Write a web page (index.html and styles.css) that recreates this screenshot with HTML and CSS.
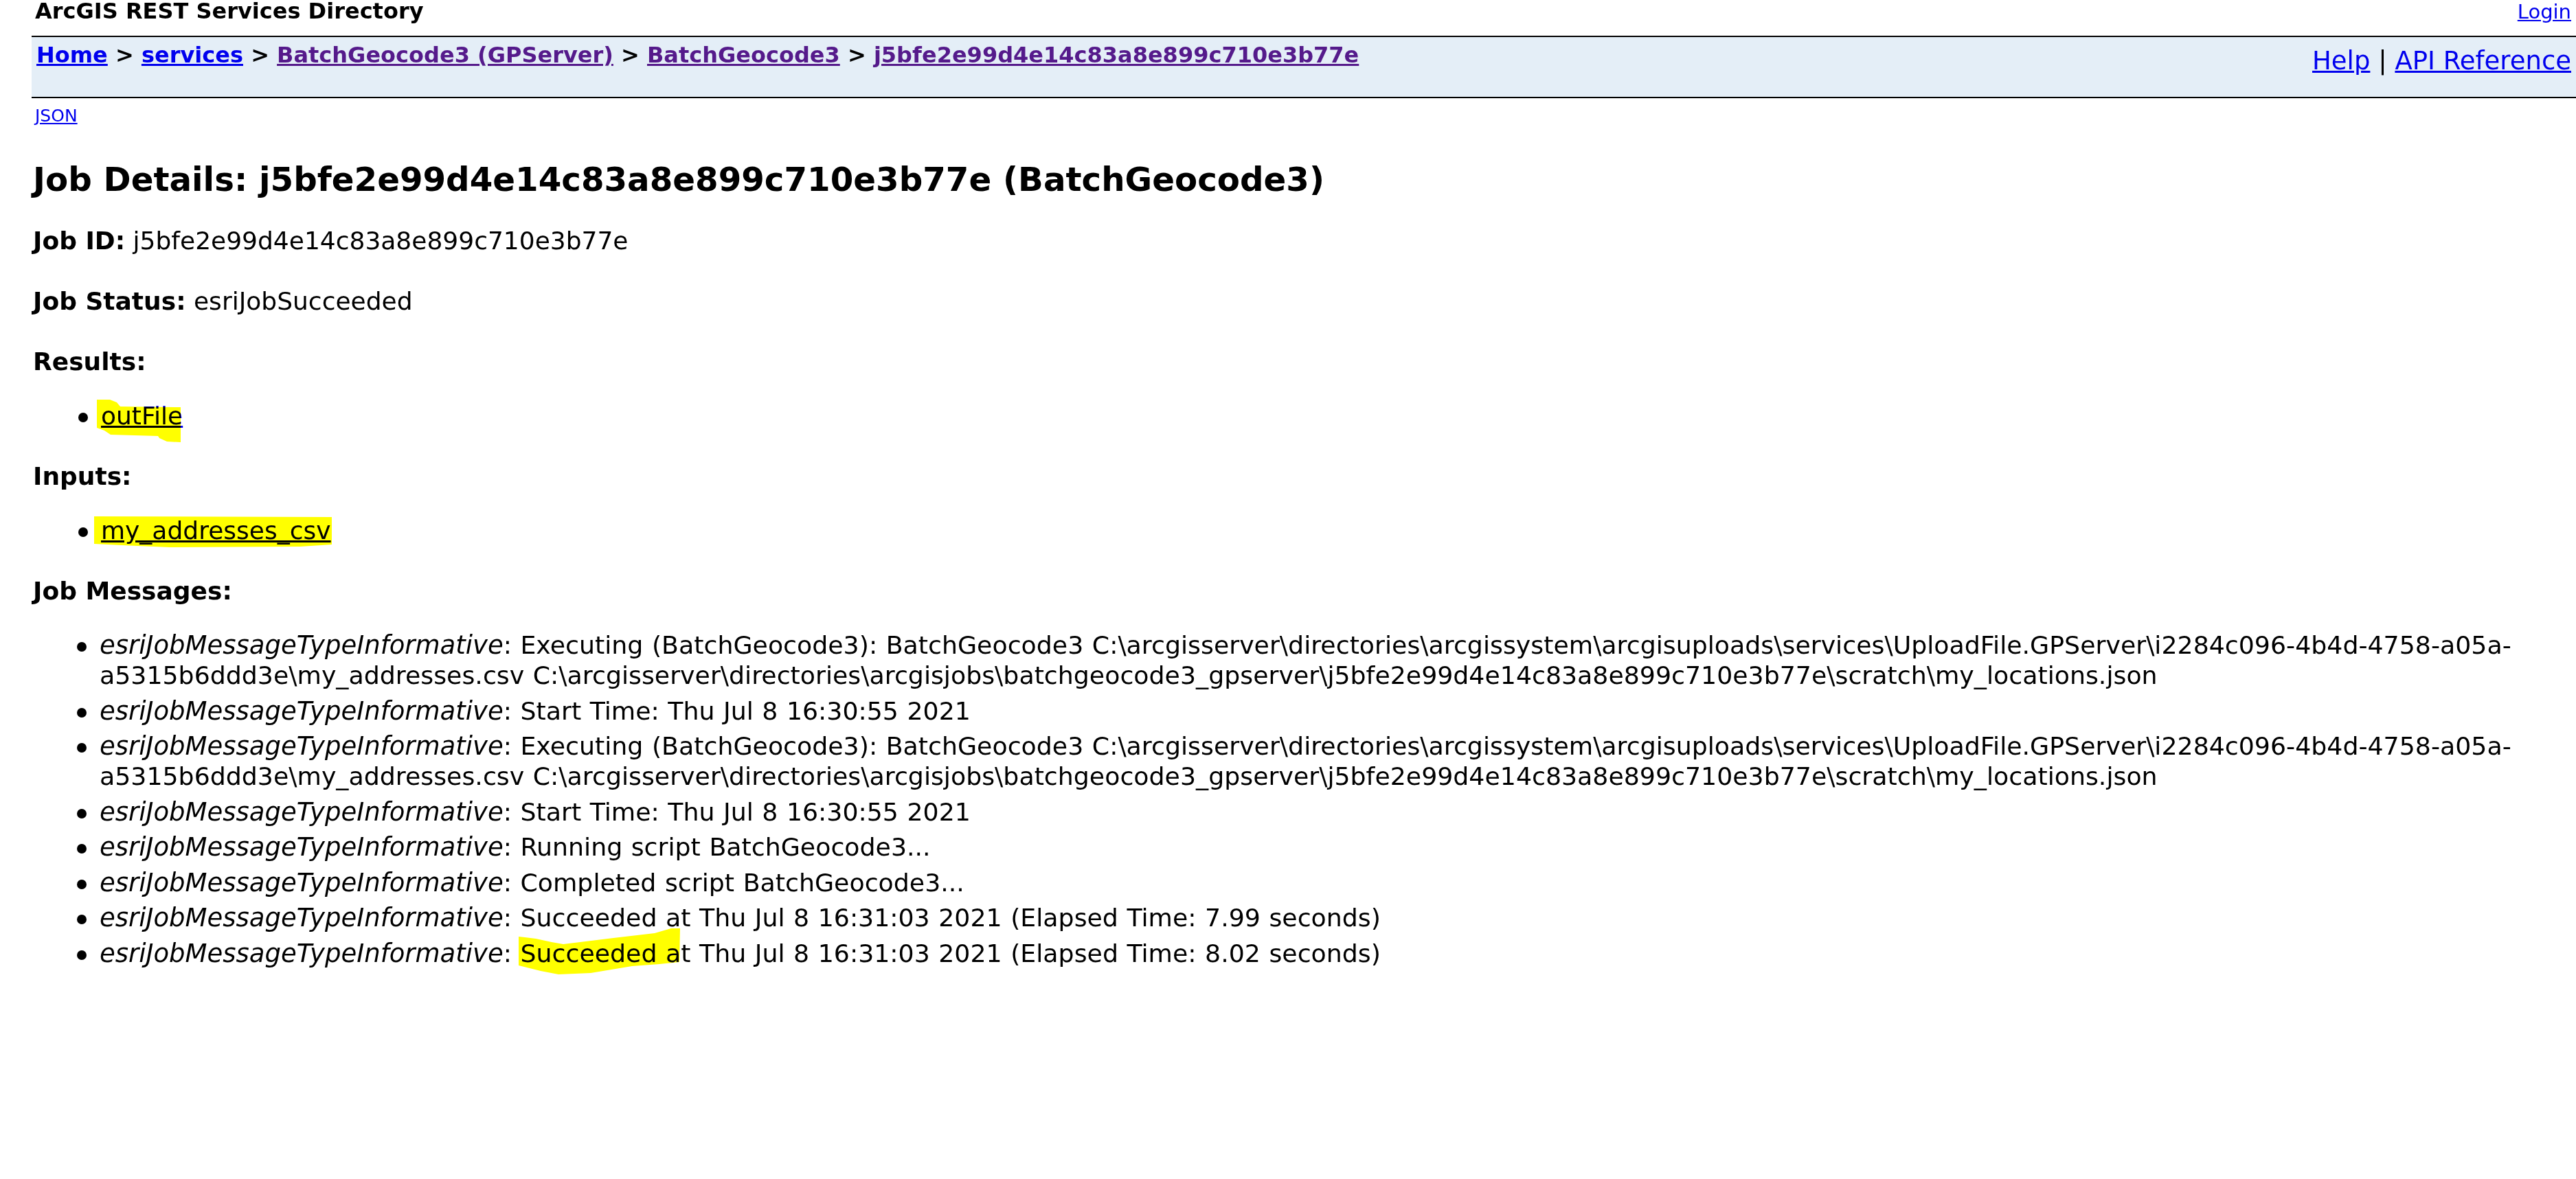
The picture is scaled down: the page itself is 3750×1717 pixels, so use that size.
FILE: index.html
```html
<!DOCTYPE html>
<html lang="en">
<head>
<meta charset="UTF-8" />
<title>ArcGIS REST Services Directory</title>
<link rel="stylesheet" href="styles.css">
</head>
<body>

<div class="topbar">
  <span class="title">ArcGIS REST Services Directory</span>
  <a class="login" href="#">Login</a>
</div>

<div class="navbar">
  <div class="crumbs"><a href="#">Home</a> &gt; <a href="#">services</a> &gt; <a class="visited" href="#">BatchGeocode3 (GPServer)</a> &gt; <a class="visited" href="#">BatchGeocode3</a> &gt; <a class="visited" href="#">j5bfe2e99d4e14c83a8e899c710e3b77e</a></div>
  <div class="help"><a href="#">Help</a> | <a href="#">API Reference</a></div>
</div>

<div class="content">
  <a class="json" href="#">JSON</a>

  <h2>Job Details: j5bfe2e99d4e14c83a8e899c710e3b77e (BatchGeocode3)</h2>

  <p class="field"><b>Job ID:</b> j5bfe2e99d4e14c83a8e899c710e3b77e</p>
  <p class="field"><b>Job Status:</b> esriJobSucceeded</p>

  <p class="section">Results:</p>
  <ul class="items">
    <li><span class="mark"><a href="#">outFile</a><svg class="marker" width="122" height="62" viewBox="0 0 122 62"><polygon points="0,0 19,0 29,4 34,10 122,11 122,62 102,61 91,56 89,53 20,51 11,45 0,41"/></svg></span></li>
  </ul>

  <p class="section">Inputs:</p>
  <ul class="items">
    <li><span class="mark"><a href="#">my_addresses_csv</a><svg class="marker marker-wide" width="346" height="47" viewBox="0 0 346 47"><polygon points="0,1 346,2 346,42 300,45 110,46 40,43 0,41"/></svg></span></li>
  </ul>

  <p class="section">Job Messages:</p>
  <ul class="messages">
    <li><i>esriJobMessageTypeInformative</i>: Executing (BatchGeocode3): BatchGeocode3 C:\arcgisserver\directories\arcgissystem\arcgisuploads\services\UploadFile.GPServer\i2284c096-4b4d-4758-a05a-a5315b6ddd3e\my_addresses.csv C:\arcgisserver\directories\arcgisjobs\batchgeocode3_gpserver\j5bfe2e99d4e14c83a8e899c710e3b77e\scratch\my_locations.json</li>
    <li><i>esriJobMessageTypeInformative</i>: Start Time: Thu Jul 8 16:30:55 2021</li>
    <li><i>esriJobMessageTypeInformative</i>: Executing (BatchGeocode3): BatchGeocode3 C:\arcgisserver\directories\arcgissystem\arcgisuploads\services\UploadFile.GPServer\i2284c096-4b4d-4758-a05a-a5315b6ddd3e\my_addresses.csv C:\arcgisserver\directories\arcgisjobs\batchgeocode3_gpserver\j5bfe2e99d4e14c83a8e899c710e3b77e\scratch\my_locations.json</li>
    <li><i>esriJobMessageTypeInformative</i>: Start Time: Thu Jul 8 16:30:55 2021</li>
    <li><i>esriJobMessageTypeInformative</i>: Running script BatchGeocode3...</li>
    <li><i>esriJobMessageTypeInformative</i>: Completed script BatchGeocode3...</li>
    <li><i>esriJobMessageTypeInformative</i>: Succeeded at Thu Jul 8 16:31:03 2021 (Elapsed Time: 7.99 seconds)</li>
    <li><i>esriJobMessageTypeInformative</i>: <span class="mark">Succeeded at<svg class="marker marker-succ" width="236" height="68" viewBox="0 0 236 68"><polygon points="0,12 25,15 48,20 65,23 138,14 198,7 222,0 235,0 234,49 205,52 165,55 105,65 58,67 32,62 0,54"/></svg></span> Thu Jul 8 16:31:03 2021 (Elapsed Time: 8.02 seconds)</li>
  </ul>
</div>

</body>
</html>
```

FILE: styles.css
```css
body {
  margin: 0;
  font-family: "DejaVu Sans", Verdana, sans-serif;
  color: #000;
  background: #fff;
}

a {
  color: #0000ee;
}

a.visited {
  color: #551a8b;
}

.topbar {
  display: flex;
  justify-content: space-between;
  height: 52px;
  padding: 0 7px 0 51px;
}

.title {
  font-weight: bold;
  font-size: 32px;
  line-height: 32px;
}

.login {
  font-size: 29px;
  line-height: 34px;
}

.navbar {
  display: flex;
  justify-content: space-between;
  align-items: flex-start;
  height: 87px;
  margin-left: 46px;
  border-top: 2px solid #000;
  border-bottom: 2px solid #000;
  background: #e4eef7;
}

.crumbs {
  padding: 6px 0 0 7px;
  font-weight: bold;
  font-size: 32px;
  line-height: 40px;
}

.help {
  padding: 15px 7px 0 0;
  font-size: 37px;
  line-height: 40px;
}

.content {
  padding: 0 8px 0 48px;
}

.json {
  display: inline-block;
  margin: 11px 0 0 3px;
  font-size: 25px;
  line-height: 30px;
}

h2 {
  margin: 49px 0 40px;
  font-size: 48.3px;
  line-height: 56px;
}

.field,
.section,
.items,
.messages {
  font-size: 36px;
  line-height: 44px;
}

.field {
  margin: 0 0 44px;
}

.section {
  margin: 0 0 35px;
  font-weight: bold;
}

.items,
.messages {
  margin: 0 0 44px;
  padding-left: 99px;
  list-style: none;
}

.messages {
  padding-left: 97px;
  font-size: 36.3px;
  word-spacing: 1px;
}

.messages i {
  font-size: 37px;
  line-height: 40px;
}

.items li,
.messages li {
  position: relative;
}

.messages li {
  margin-bottom: 7.5px;
}

.items li::before,
.messages li::before {
  content: "";
  position: absolute;
  left: -33px;
  top: 17px;
  width: 14px;
  height: 14px;
  border-radius: 50%;
  background: #000;
}

/* yellow highlighter strokes drawn over the text */
.mark {
  position: relative;
}

.marker {
  position: absolute;
  left: -6px;
  top: -3px;
  fill: #ffff00;
  mix-blend-mode: multiply;
  pointer-events: none;
}

.marker-wide {
  left: -10px;
  top: -1px;
}

.marker-succ {
  left: -2px;
  top: -15px;
}
```
